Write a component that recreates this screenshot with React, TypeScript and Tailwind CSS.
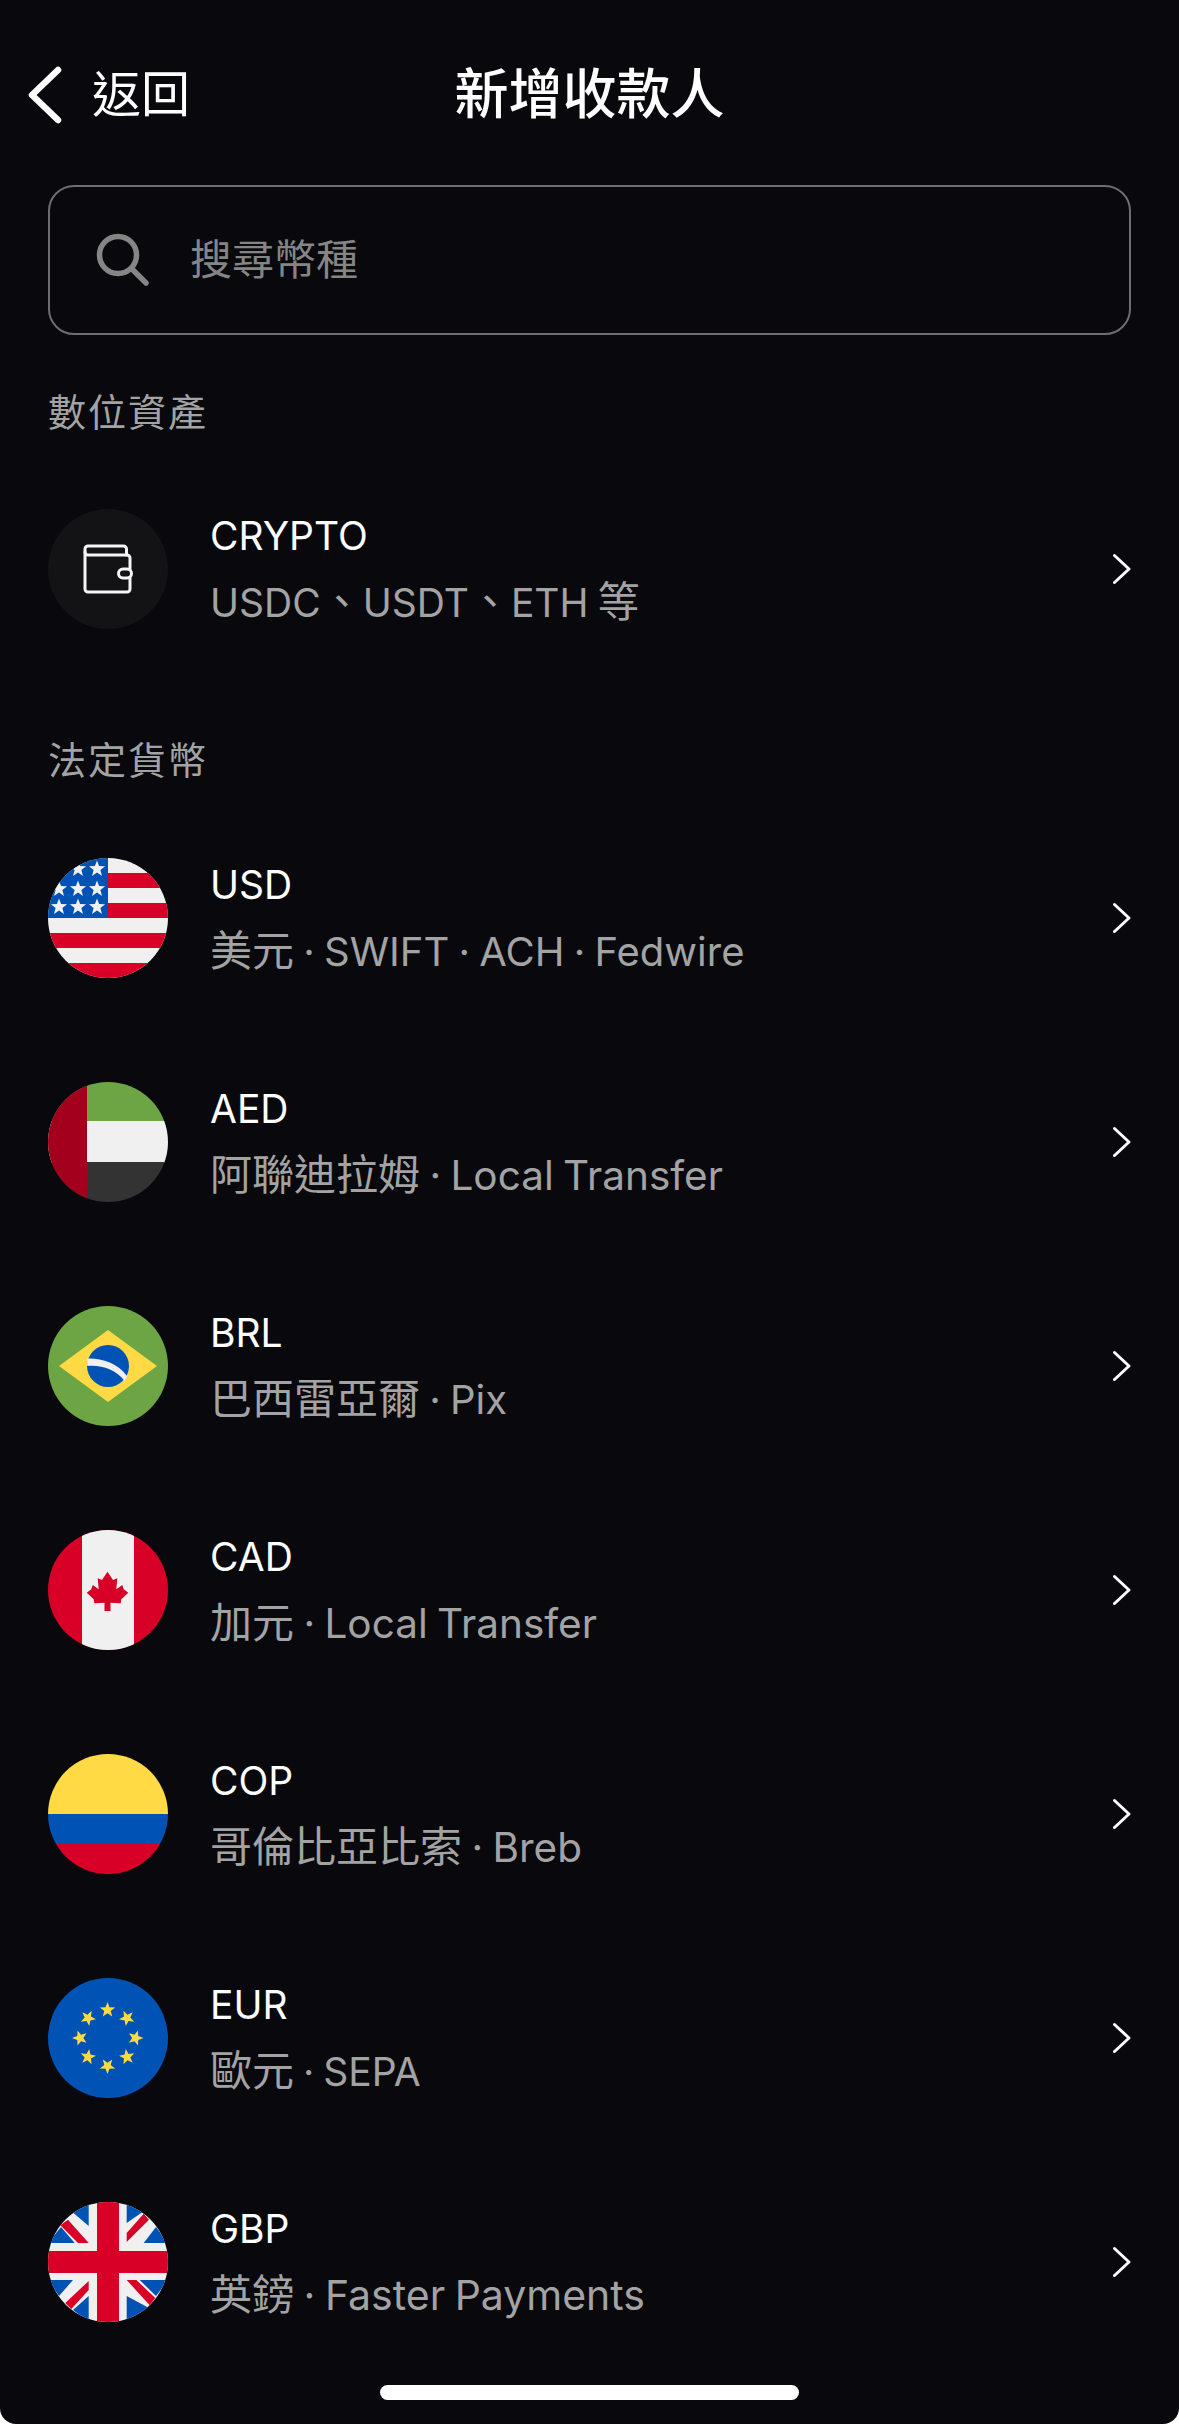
import React from 'react';

const font = "font-['Inter','Noto_Sans_CJK_TC',sans-serif]";

function Star({ cx, cy, r, fill, rot = 0 }: { cx: number; cy: number; r: number; fill: string; rot?: number }) {
  const pts: string[] = [];
  for (let i = 0; i < 10; i++) {
    const rad = i % 2 === 0 ? r : r * 0.42;
    const a = ((i * 36 - 90 + rot) * Math.PI) / 180;
    pts.push(`${(cx + rad * Math.cos(a)).toFixed(2)},${(cy + rad * Math.sin(a)).toFixed(2)}`);
  }
  return <polygon points={pts.join(' ')} fill={fill} />;
}

function Flag({ id, children }: { id: string; children: React.ReactNode }) {
  return (
    <svg viewBox="0 0 120 120" className="w-[120px] h-[120px] shrink-0">
      <clipPath id={id}>
        <circle cx="60" cy="60" r="60" />
      </clipPath>
      <g clipPath={`url(#${id})`}>{children}</g>
    </svg>
  );
}

const RED = '#d80027';
const WHITE = '#f0f0f0';
const BLUE = '#0052b4';
const YELLOW = '#ffda44';
const GREEN = '#6da544';

function UsFlag() {
  const stars = [
    [30, 11], [49, 11],
    [11, 31], [30, 31], [49, 31],
    [11, 49], [30, 49], [49, 49],
  ];
  return (
    <Flag id="us">
      <rect width="120" height="120" fill={WHITE} />
      <rect x="60" y="15" width="60" height="15" fill={RED} />
      <rect x="60" y="45" width="60" height="15" fill={RED} />
      <rect y="75" width="120" height="15" fill={RED} />
      <rect y="105" width="120" height="15" fill={RED} />
      <rect width="60" height="60" fill={BLUE} />
      {stars.map(([x, y], i) => (
        <Star key={i} cx={x} cy={y} r={8.5} fill={WHITE} />
      ))}
    </Flag>
  );
}

function AeFlag() {
  return (
    <Flag id="ae">
      <rect width="120" height="40" fill={GREEN} />
      <rect y="39" width="120" height="42" fill={WHITE} />
      <rect y="80" width="120" height="40" fill="#333333" />
      <rect width="39" height="120" fill="#a2001d" />
    </Flag>
  );
}

function BrFlag() {
  return (
    <Flag id="br">
      <rect width="120" height="120" fill={GREEN} />
      <polygon points="60,24 109,60 60,96 11,60" fill={YELLOW} />
      <circle cx="60" cy="60" r="21" fill={BLUE} />
      <path d="M39.5 52.5 C 53 52 70 57 79 70 L 76.5 75 C 68 63 52 58.5 39.3 60 C 39 57 39 55 39.5 52.5 Z" fill={WHITE} />
    </Flag>
  );
}

function CaFlag() {
  return (
    <Flag id="ca">
      <rect width="120" height="120" fill={RED} />
      <rect x="34" width="52" height="120" fill={WHITE} />
      <path d="M59.5 41.7 L65 50 L69.3 48.3 L68.3 59.3 L74.3 55 L75.7 59.3 L80.3 62.7 L73.3 69.3 L72.7 73.3 L62.5 72.7 L62.5 81 L56.5 81 L56.5 72.7 L46.3 73.3 L45.7 69.3 L38.7 62.7 L43.3 59.3 L44.7 55 L50.7 59.3 L49.7 48.3 L54 50 Z" fill={RED} />
    </Flag>
  );
}

function CoFlag() {
  return (
    <Flag id="co">
      <rect width="120" height="60" fill={YELLOW} />
      <rect y="60" width="120" height="30" fill={BLUE} />
      <rect y="90" width="120" height="30" fill={RED} />
    </Flag>
  );
}

function EuFlag() {
  const pts = [
    [59.5, 32], [79, 40], [87.5, 60], [79, 79], [59.5, 88], [40, 79], [32, 60], [40, 40],
  ];
  return (
    <Flag id="eu">
      <rect width="120" height="120" fill={BLUE} />
      {pts.map(([x, y], i) => (
        <Star key={i} cx={x} cy={y} r={8} fill={YELLOW} rot={i * 45} />
      ))}
    </Flag>
  );
}

function GbFlag() {
  return (
    <Flag id="gb">
      <rect width="120" height="120" fill={WHITE} />
      {/* blue triangles */}
      <polygon points="40.7,0 40.7,24 22,8 30,0" fill={BLUE} />
      <polygon points="78.7,0 78.7,21 96,9 90,0" fill={BLUE} />
      <polygon points="13,25 0,41 26.7,41" fill={BLUE} />
      <polygon points="108,25 120,41 95.7,41" fill={BLUE} />
      <polygon points="0,78 25,78 11,94" fill={BLUE} />
      <polygon points="91.7,78 120,78 108,94" fill={BLUE} />
      <polygon points="40.7,94 40.7,120 25,108" fill={BLUE} />
      <polygon points="78.7,94 78.7,120 101,106" fill={BLUE} />
      {/* red diagonals */}
      <polygon points="12.3,23.3 20,17.7 40.7,41 30,41" fill={RED} />
      <polygon points="78.7,40 78.7,31 95.7,11.7 101,17.7" fill={RED} />
      <polygon points="78.7,78 88.3,78 107.3,96 101.7,103.3" fill={RED} />
      <polygon points="40.7,79 40.7,88 23.3,107 17.3,101" fill={RED} />
      <rect x="49" width="22" height="120" fill={RED} />
      <rect y="49" width="120" height="22" fill={RED} />
    </Flag>
  );
}

function WalletIcon() {
  return (
    <svg viewBox="0 0 50 50" className="w-[50px] h-[50px] overflow-visible" fill="none" stroke="#f5f5f5" strokeWidth="3" strokeLinecap="round" strokeLinejoin="round">
      <path d="M43.5 11 V5 a3 3 0 0 0 -3 -3 H5 a3 3 0 0 0 -3 3 V45 a3 3 0 0 0 3 3 H44 a3 3 0 0 0 3 -3 V34" />
      <path d="M2 8 a3 3 0 0 0 3 3 H44 a3 3 0 0 1 3 3 V25" />
      <rect x="35.5" y="25" width="13" height="9" rx="4.5" />
    </svg>
  );
}

function Chevron() {
  return (
    <svg viewBox="0 0 20 32" className="w-[20px] h-[32px] shrink-0" fill="none" stroke="#ffffff" strokeWidth="3" strokeLinecap="round" strokeLinejoin="round">
      <path d="M3.5 2.5 L18 16 L3.5 29.5" />
    </svg>
  );
}

// Chinese runs sit at 42px, latin size differs per row to follow the reference widths
function Sub({ text, latin }: { text: string; latin: string }) {
  const parts = text.split(/([\u3000-\u9fff]+)/).filter(Boolean);
  return (
    <span className="mt-[20px] h-[46px] leading-[46px] whitespace-nowrap [word-spacing:-2px] text-[#a3a3a3]">
      {parts.map((p, i) =>
        /[\u3000-\u9fff]/.test(p) ? (
          <span key={i} className="text-[42px]">{p}</span>
        ) : (
          <span key={i} className={latin}>{p}</span>
        )
      )}
    </span>
  );
}

function Row({ icon, title, sub, latin, mt }: { icon: React.ReactNode; title: string; sub: string; latin: string; mt: string }) {
  return (
    <div className={`flex items-center h-[120px] ${mt}`}>
      {icon}
      <div className="ml-[42px] flex-1 flex flex-col">
        <span className="text-[39px] leading-[46px] text-white">{title}</span>
        <Sub text={sub} latin={latin} />
      </div>
      <Chevron />
    </div>
  );
}

const fiat = [
  { icon: <UsFlag />, title: 'USD', sub: '美元 · SWIFT · ACH · Fedwire', latin: 'text-[40px]' },
  { icon: <AeFlag />, title: 'AED', sub: '阿聯迪拉姆 · Local Transfer', latin: 'text-[40.5px]' },
  { icon: <BrFlag />, title: 'BRL', sub: '巴西雷亞爾 · Pix', latin: 'text-[40px]' },
  { icon: <CaFlag />, title: 'CAD', sub: '加元 · Local Transfer', latin: 'text-[40.5px]' },
  { icon: <CoFlag />, title: 'COP', sub: '哥倫比亞比索 · Breb', latin: 'text-[40.5px]' },
  { icon: <EuFlag />, title: 'EUR', sub: '歐元 · SEPA', latin: 'text-[39px]' },
  { icon: <GbFlag />, title: 'GBP', sub: '英鎊 · Faster Payments', latin: 'text-[41px]' },
];

export default function App() {
  return (
    <div className="w-[1179px] h-[2424px] bg-white">
      <div className={`${font} relative w-[1179px] h-[2424px] bg-[#08080d] overflow-hidden rounded-b-[16px]`}>
        {/* Header */}
        <div className="grid grid-cols-[1fr_auto_1fr] items-center h-[60px] mt-[65px] px-[27px]">
          <div className="flex items-center">
            <svg viewBox="0 0 36 58" className="w-[36px] h-[58px]" fill="none" stroke="#ffffff" strokeWidth="6.5" strokeLinecap="round" strokeLinejoin="round">
              <path d="M31 4 L5 29 L31 54" />
            </svg>
            <span className="ml-[29px] text-[49px] leading-[60px] text-white">返回</span>
          </div>
          <span className="text-[54px] leading-[60px] font-medium text-white">新增收款人</span>
          <div />
        </div>

        <div className="px-[48px]">
          {/* Search */}
          <div className="flex items-center h-[150px] mt-[60px] px-[46px] border-2 border-[#6e6e6e] rounded-[26px]">
            <svg viewBox="0 0 54 54" className="w-[54px] h-[54px]" fill="none" stroke="#858585" strokeWidth="5.5" strokeLinecap="round">
              <circle cx="22" cy="22" r="18.5" />
              <path d="M36 36 L50 50" />
            </svg>
            <span className="ml-[40px] text-[42px] leading-[50px] text-[#858585]">搜尋幣種</span>
          </div>

          <div className="mt-[54px] text-[38px] leading-[46px] tracking-[2px] text-[#a3a3a3]">數位資產</div>

          <Row
            mt="mt-[74px]"
            icon={
              <div className="flex items-center justify-center w-[120px] h-[120px] shrink-0 rounded-full bg-[#131316]">
                <WalletIcon />
              </div>
            }
            title="CRYPTO"
            sub="USDC、USDT、ETH 等"
            latin="text-[39px]"
          />

          <div className="mt-[108px] text-[38px] leading-[46px] tracking-[2px] text-[#a3a3a3]">法定貨幣</div>

          {fiat.map((f, i) => (
            <Row key={f.title} mt={i === 0 ? 'mt-[75px]' : 'mt-[104px]'} icon={f.icon} title={f.title} sub={f.sub} latin={f.latin} />
          ))}
        </div>

        {/* Home indicator */}
        <div className="absolute left-[380px] top-[2385px] w-[419px] h-[15px] rounded-[8px] bg-white" />
      </div>
    </div>
  );
}
